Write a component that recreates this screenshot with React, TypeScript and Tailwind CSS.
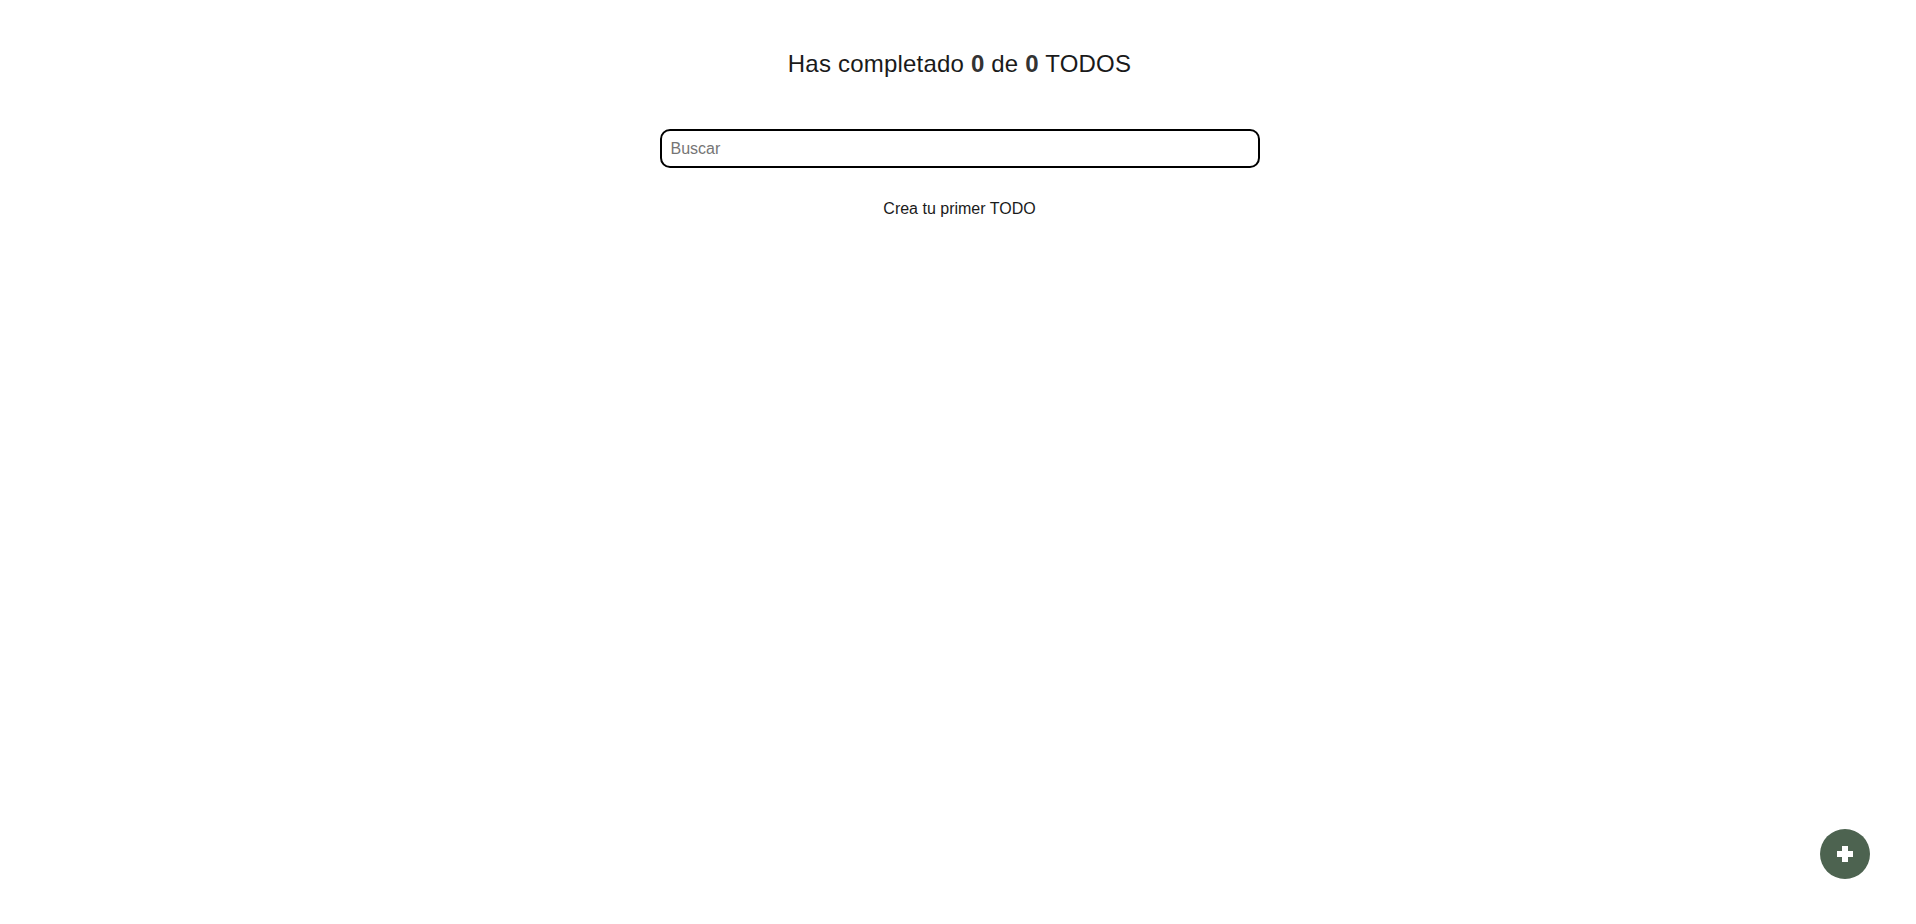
import { useState } from "react";

export default function App() {
  const [query, setQuery] = useState("");
  const total = 0;
  const completed = 0;

  return (
    <div className="relative h-screen overflow-hidden bg-white pl-[3px] font-['Liberation_Sans',Arial,sans-serif] text-[#1a1a1a]">
      <div className="mx-auto flex w-[600px] flex-col items-center pt-[48px]">
        <h1 className="text-[24px] leading-[32px] tracking-[0.2px]">
          Has completado <span className="font-bold text-[#333]">{completed}</span> de{" "}
          <span className="font-bold text-[#333]">{total}</span> TODOS
        </h1>
        <input
          value={query}
          onChange={(e) => setQuery(e.target.value)}
          placeholder="Buscar"
          className="mt-[49px] h-[39px] w-full rounded-[10px] border-2 border-black px-[9px] text-[16px] outline-none placeholder:text-[#757575]"
        />
        <p className="mt-[31px] text-[16px] leading-[20px]">Crea tu primer TODO</p>
      </div>
      <button
        type="button"
        className="fixed bottom-[45px] right-[46px] flex h-[50px] w-[50px] items-center justify-center rounded-full bg-[#4d6350]"
      >
        <svg width="16" height="16" viewBox="0 0 16 16" fill="white">
          <rect x="5" y="0" width="6" height="16" />
          <rect x="0" y="5" width="16" height="6" />
        </svg>
      </button>
    </div>
  );
}
